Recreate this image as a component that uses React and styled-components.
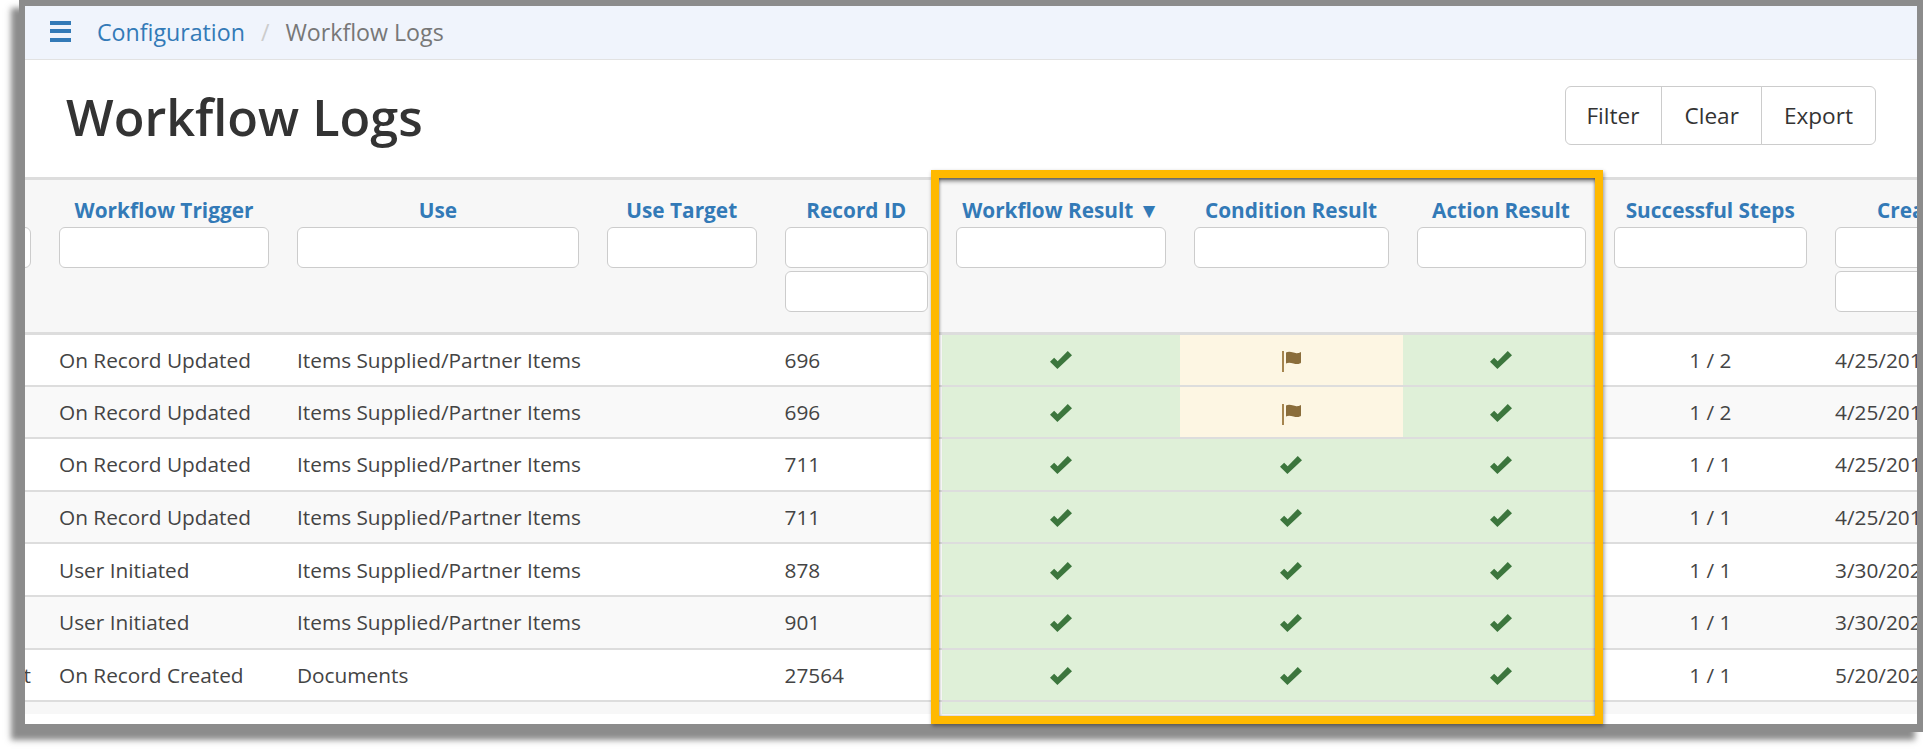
import React from "react";
import styled, { createGlobalStyle } from "styled-components";

const Global = createGlobalStyle`
  html, body {
    margin: 0;
    padding: 0;
    background: #fff;
    overflow: hidden;
    font-family: "Open Sans", "Noto Sans", sans-serif;
  }
`;

const Page = styled.div`
  width: 1923px;
  height: 749px;
  padding-left: 19px;
  box-sizing: border-box;
`;

const Frame = styled.div`
  position: relative;
  width: 1904px;
  height: 732px;
  box-sizing: border-box;
  background: #fff;
  border: solid #8c8c8c;
  border-width: 6px 6px 8px 6px;
  box-shadow: -8px 8px 6px rgba(120, 120, 120, 0.85);
`;

const Breadcrumb = styled.div`
  height: 54px;
  box-sizing: border-box;
  display: flex;
  align-items: center;
  padding: 0 0 2px 25px;
  background: #f0f4fc;
  border-bottom: 1px solid #e2e2e2;
  font-size: 23.2px;
`;

const Burger = styled.div`
  width: 21px;
  display: flex;
  flex-direction: column;
  gap: 4.5px;
  margin: 0 26px 1px 0;
  span {
    height: 4px;
    background: #337ab7;
  }
`;

const Crumb = styled.a`
  color: #337ab7;
`;

const Slash = styled.span`
  color: #ccc;
  margin: 0 16px;
`;

const Current = styled.span`
  color: #777;
`;

const TitleRow = styled.div`
  height: 117px;
  display: flex;
  align-items: center;
  justify-content: space-between;
  padding: 0 41px 0 41px;
  box-sizing: border-box;
`;

const Title = styled.h1`
  margin: 0 0 4px;
  font-size: 50.4px;
  font-weight: 600;
  color: #333;
`;

const BtnGroup = styled.div`
  display: flex;
  margin-bottom: 7px;
`;

const Btn = styled.button`
  height: 59px;
  padding: 0 22px;
  font: inherit;
  font-size: 22.6px;
  color: #333;
  background: #fff;
  border: 1px solid #ccc;
  margin-left: -1px;
  &:first-child {
    padding-left: 20px;
    border-radius: 6px 0 0 6px;
  }
  &:last-child {
    border-radius: 0 6px 6px 0;
  }
`;

const TableWrap = styled.div`
  overflow: hidden;
`;

const Table = styled.table`
  table-layout: fixed;
  border-collapse: collapse;
  width: 2090px;
  margin-left: -100px;
  font-size: 20.8px;
  color: #444;
`;

const HeadRow = styled.tr`
  background: #f7f7f7;
  height: 154.5px;
  border-top: 3px solid #ddd;
  border-bottom: 3px solid #ddd;
`;

const Th = styled.th`
  vertical-align: top;
  padding: 15px 14px 0;
  font-weight: 700;
  color: #337ab7;
  text-align: center;
  white-space: nowrap;
`;

const ThLabel = styled.div`
  font-size: 20.8px;
  line-height: 30px;
  height: 32px;
`;

const FilterInput = styled.input`
  display: block;
  width: 100%;
  height: 41px;
  box-sizing: border-box;
  background: #fff;
  border: 1px solid #ccc;
  border-radius: 6px;
  margin-bottom: 3px;
`;

const Row = styled.tr`
  height: 52.6px;
  background: ${(p) => (p.$striped ? "#f9f9f9" : "#fff")};
  border-bottom: 2px solid #ddd;
`;

const FootRow = styled.tr`
  height: 13px;
  background: #f7f7f7;
`;

const Td = styled.td`
  padding: 0 14px;
  white-space: nowrap;
  overflow: hidden;
  text-align: ${(p) => p.$align || "left"};
  background: ${(p) =>
    p.$state === "ok" ? "#dff0d8" : p.$state === "warn" ? "#fdf6e3" : "transparent"};
`;

const CheckSvg = styled.svg`
  width: 22px;
  height: 18px;
  margin-bottom: 3px;
  vertical-align: middle;
  fill: #3c763d;
`;

const Check = () => (
  <CheckSvg viewBox="0 0 22.3 18">
    <path d="M0 10.700L4.200 6.800L7.800 10.300L18 0L22.300 4.200L7.500 18z" />
  </CheckSvg>
);

const FlagSvg = styled.svg`
  width: 19px;
  height: 21px;
  vertical-align: middle;
  fill: #8a6d3b;
`;

const Flag = () => (
  <FlagSvg viewBox="0 0 19 21">
    <rect x="0" y="0" width="2" height="21" fill="#a5854f" />
    <path d="M4 1.500c2-1 4-1 7.500 0s4.500 1 7.500-.5v10.500c-.5 1.500-4 2-7.500 1s-5.500-1-7.500 0z" />
  </FlagSvg>
);

const Highlight = styled.div`
  position: absolute;
  left: 906px;
  top: 164px;
  width: 672px;
  height: 554px;
  box-sizing: border-box;
  border: 8px solid #ffb900;
  box-shadow: 1px 2px 4px rgba(0, 0, 0, 0.4), inset 0 4px 4px -1px rgba(0, 0, 0, 0.5),
    inset 0 0 3px rgba(0, 0, 0, 0.35);
  pointer-events: none;
`;

const columns = [120, 238, 310, 177.5, 171.5, 237.5, 223, 197, 221.5, 194];

const headers = [
  { label: "", inputs: 1 },
  { label: "Workflow Trigger", inputs: 1 },
  { label: "Use", inputs: 1 },
  { label: "Use Target", inputs: 1 },
  { label: "Record ID", inputs: 2 },
  { label: "Workflow Result ▼", inputs: 1 },
  { label: "Condition Result", inputs: 1 },
  { label: "Action Result", inputs: 1 },
  { label: "Successful Steps", inputs: 1 },
  { label: "Created", inputs: 2 },
];

const rows = [
  { trigger: "On Record Updated", use: "Items Supplied/Partner Items", id: "696", cond: "warn", steps: "1 / 2", date: "4/25/2019" },
  { trigger: "On Record Updated", use: "Items Supplied/Partner Items", id: "696", cond: "warn", steps: "1 / 2", date: "4/25/2019" },
  { trigger: "On Record Updated", use: "Items Supplied/Partner Items", id: "711", cond: "ok", steps: "1 / 1", date: "4/25/2019" },
  { trigger: "On Record Updated", use: "Items Supplied/Partner Items", id: "711", cond: "ok", steps: "1 / 1", date: "4/25/2019" },
  { trigger: "User Initiated", use: "Items Supplied/Partner Items", id: "878", cond: "ok", steps: "1 / 1", date: "3/30/2020" },
  { trigger: "User Initiated", use: "Items Supplied/Partner Items", id: "901", cond: "ok", steps: "1 / 1", date: "3/30/2020" },
  { lead: "t", trigger: "On Record Created", use: "Documents", id: "27564", cond: "ok", steps: "1 / 1", date: "5/20/2020" },
];

export default function App() {
  return (
    <Page>
      <Global />
      <Frame>
        <Breadcrumb>
          <Burger>
            <span />
            <span />
            <span />
          </Burger>
          <Crumb>Configuration</Crumb>
          <Slash>/</Slash>
          <Current>Workflow Logs</Current>
        </Breadcrumb>
        <TitleRow>
          <Title>Workflow Logs</Title>
          <BtnGroup>
            <Btn>Filter</Btn>
            <Btn>Clear</Btn>
            <Btn>Export</Btn>
          </BtnGroup>
        </TitleRow>
        <TableWrap>
          <Table>
            <colgroup>
              {columns.map((w, i) => (
                <col key={i} style={{ width: w }} />
              ))}
            </colgroup>
            <thead>
              <HeadRow>
                {headers.map((h, i) => (
                  <Th key={i}>
                    <ThLabel>{h.label}</ThLabel>
                    {Array.from({ length: h.inputs }).map((_, j) => (
                      <FilterInput key={j} />
                    ))}
                  </Th>
                ))}
              </HeadRow>
            </thead>
            <tbody>
              {rows.map((r, i) => (
                <Row key={i} $striped={i % 2 === 1}>
                  <Td $align="right">{r.lead}</Td>
                  <Td>{r.trigger}</Td>
                  <Td>{r.use}</Td>
                  <Td />
                  <Td>{r.id}</Td>
                  <Td $state="ok" $align="center"><Check /></Td>
                  <Td $state={r.cond} $align="center">
                    {r.cond === "warn" ? <Flag /> : <Check />}
                  </Td>
                  <Td $state="ok" $align="center"><Check /></Td>
                  <Td $align="center">{r.steps}</Td>
                  <Td>{r.date}</Td>
                </Row>
              ))}
              <FootRow>
                {columns.map((_, i) => (
                  <Td key={i} $state={i >= 5 && i <= 7 ? "ok" : undefined} />
                ))}
              </FootRow>
            </tbody>
          </Table>
        </TableWrap>
        <Highlight />
      </Frame>
    </Page>
  );
}
